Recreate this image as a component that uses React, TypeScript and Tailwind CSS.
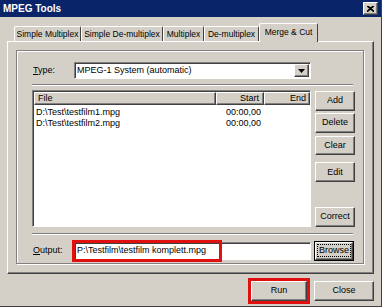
import React from 'react';

const raised =
  'bg-[#d4d0c8] border border-t-white border-l-white border-r-[#404040] border-b-[#404040] shadow-[inset_-1px_-1px_0_#808080]';
const sunken =
  'bg-white border border-t-[#808080] border-l-[#808080] border-r-white border-b-white shadow-[inset_1px_1px_0_#404040]';

function Button({ label, className = '' }: { label: string; className?: string }) {
  return (
    <div className={`${raised} flex items-center justify-center text-[9px] ${className}`}>
      {label}
    </div>
  );
}

function Etched({ className = '' }: { className?: string }) {
  return <div className={`h-[2px] border-t border-t-[#808080] border-b border-b-white ${className}`} />;
}

const tabs = [
  { label: 'Simple Multiplex', w: 'w-[67px]' },
  { label: 'Simple De-multiplex', w: 'w-[82px]' },
  { label: 'Multiplex', w: 'w-[41px]' },
  { label: 'De-multiplex', w: 'w-[55px]' },
];

const files = ['D:\\Test\\testfilm1.mpg', 'D:\\Test\\testfilm2.mpg'];

export default function App() {
  return (
    <div
      className="w-[382px] h-[307px] overflow-hidden bg-[#d4d0c8] border-r border-b border-[#404040] text-black flex flex-col"
      style={{ fontFamily: '"Liberation Sans", Arial, sans-serif' }}
    >
      {/* Title bar */}
      <div className="h-[17px] bg-[#0a246a] flex items-center justify-between pl-[3px] pr-[3px] shrink-0">
        <span className="text-white font-bold text-[10px] leading-none">MPEG Tools</span>
        <div className={`${raised} w-[15px] h-[13px] flex items-center justify-center`}>
          <svg width="7" height="6" viewBox="0 0 7 6">
            <path d="M0 0 L7 6 M1 0 L7 5.2 M7 0 L0 6 M6 0 L0 5.2" stroke="#000" strokeWidth="1.2" />
          </svg>
        </div>
      </div>

      {/* Tabs */}
      <div className="mt-[6px] h-[18px] flex items-end pl-[14px] shrink-0 relative z-10">
        {tabs.map((t) => (
          <div
            key={t.label}
            className={`${t.w} h-[15px] border-t border-l border-t-white border-l-white border-r border-r-[#404040] rounded-tl-[2px] rounded-tr-[2px] flex items-center justify-center text-[8.5px] whitespace-nowrap`}
          >
            {t.label}
          </div>
        ))}
        <div className="w-[59px] h-[19px] -mb-[1px] bg-[#d4d0c8] border-t border-l border-t-white border-l-white border-r border-r-[#404040] rounded-tl-[2px] rounded-tr-[2px] flex items-start justify-center pt-[2px] text-[8.5px] whitespace-nowrap">
          Merge &amp; Cut
        </div>
      </div>

      {/* Tab panel */}
      <div className="ml-[7px] w-[367px] h-[233px] shrink-0 border border-t-white border-l-white border-r-[#404040] border-b-[#404040] shadow-[inset_-1px_-1px_0_#808080] pt-[8px] pl-[8px]">
        <div className="w-[348px] h-[214px] border border-[#808080] shadow-[inset_1px_1px_0_#fff,1px_1px_0_#fff] pl-[15px] pt-[11px] flex flex-col">
          {/* Type row */}
          <div className="h-[17px] flex items-center">
            <span className="w-[42px] pl-[1px] text-[9px]">
              <span className="underline">T</span>ype:
            </span>
            <div className={`${sunken} w-[237px] h-[17px] flex items-center justify-between`}>
              <span className="pl-[2px] text-[9px] whitespace-nowrap">MPEG-1 System (automatic)</span>
              <div className={`${raised} w-[15px] h-[13px] mr-[1px] flex items-center justify-center`}>
                <svg width="7" height="4" viewBox="0 0 7 4">
                  <path d="M0 0 H7 L3.5 4 Z" fill="#000" />
                </svg>
              </div>
            </div>
          </div>

          <Etched className="mt-[5px] w-[321px]" />

          {/* List + buttons */}
          <div className="mt-[4px] h-[137px] flex">
            <div className={`${sunken} w-[279px] h-[137px] flex flex-col`}>
              <div className="h-[13px] flex text-[9px] pl-[1px] pt-[1px] box-content">
                <div className={`${raised} w-[182px] h-[13px] flex items-center pl-[3px]`}>File</div>
                <div className={`${raised} w-[48px] h-[13px] flex items-center justify-end pr-[4px]`}>Start</div>
                <div className={`${raised} w-[46px] h-[13px] flex items-center justify-end pr-[3px]`}>End</div>
              </div>
              <div className="mt-[2px] pl-[3px] text-[9px]">
                {files.map((f) => (
                  <div key={f} className="h-[11px] flex items-center">
                    <span className="w-[190px] whitespace-nowrap">{f}</span>
                    <span>00:00,00</span>
                  </div>
                ))}
              </div>
            </div>
            <div className="ml-[4px] flex flex-col pt-[1px]">
              <Button label="Add" className="w-[40px] h-[20px]" />
              <Button label="Delete" className="w-[40px] h-[20px] mt-[2px]" />
              <Button label="Clear" className="w-[40px] h-[20px] mt-[3px]" />
              <Button label="Edit" className="w-[40px] h-[20px] mt-[7px]" />
              <Button label="Correct" className="w-[40px] h-[20px] mt-[25px]" />
            </div>
          </div>

          <Etched className="mt-[6px] w-[321px]" />

          {/* Output row */}
          <div className="mt-[6px] h-[19px] flex items-center">
            <span className="w-[42px] pl-[1px] text-[9px]">
              <span className="underline">O</span>utput:
            </span>
            <div className="relative">
              <div className={`${sunken} w-[237px] h-[18px] flex items-center pl-[2px] text-[9px] whitespace-nowrap`}>
                P:\Testfilm\testfilm komplett.mpg
              </div>
              <div className="absolute -left-[2px] -top-[2px] w-[150px] h-[22px] border-[3px] border-[#e01010]" />
            </div>
            <div className="ml-[3px] w-[40px] h-[20px] border border-black">
              <div className={`${raised} w-full h-full flex items-center justify-center text-[9px]`}>
                <span className="border border-dotted border-black px-[1px] leading-[11px]">Browse</span>
              </div>
            </div>
          </div>
        </div>
      </div>

      {/* Bottom buttons */}
      <div className="mt-[7px] flex justify-end pr-[7px] gap-[7px]">
        <div className="relative">
          <Button label="Run" className="w-[56px] h-[20px]" />
          <div className="absolute -left-[3px] -top-[3px] -right-[3px] -bottom-[3px] border-[3px] border-[#e01010]" />
        </div>
        <Button label="Close" className="w-[60px] h-[20px]" />
      </div>
    </div>
  );
}
